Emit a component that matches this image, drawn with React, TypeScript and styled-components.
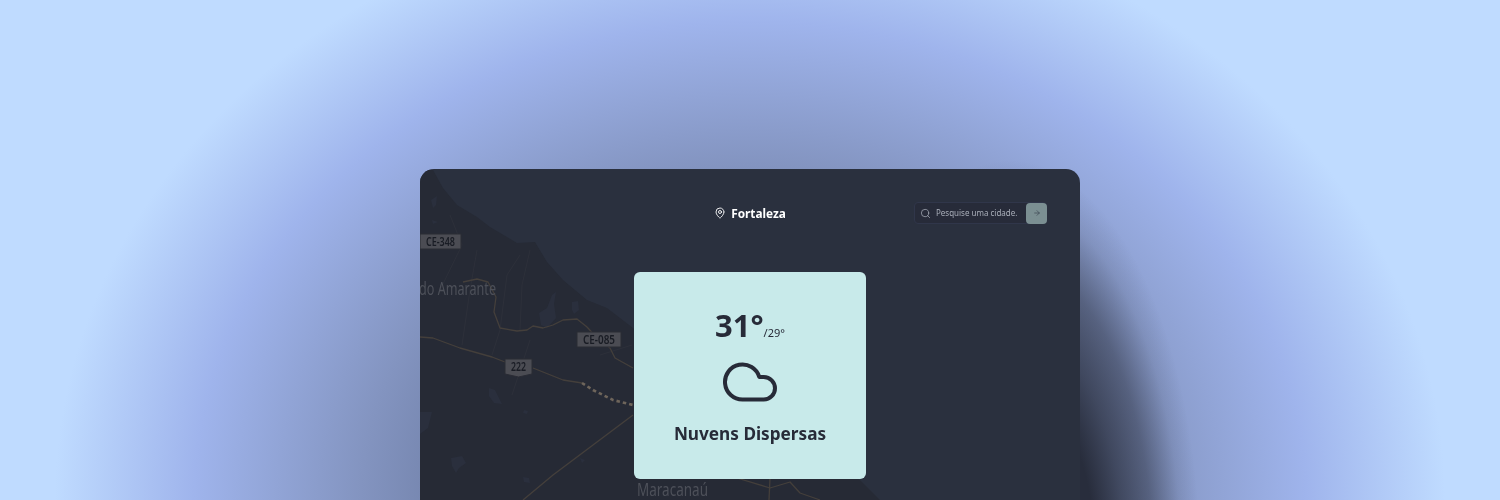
import React from "react";
import styled, { createGlobalStyle } from "styled-components";
import { MapPin, Search, ArrowRight, Cloud } from "lucide-react";

const Global = createGlobalStyle`
  html, body { margin: 0; padding: 0; background: #bfdbff; }
  body { font-family: "Noto Sans", "Open Sans", sans-serif; }
`;

const Stage = styled.main`
  height: 500px;
  overflow: hidden;
  box-sizing: border-box;
  padding-top: 169px;
  display: flex;
  justify-content: center;
  background:
    radial-gradient(ellipse 190px 400px at 1010px 560px,
      rgba(40, 45, 60, 1) 45%,
      rgba(40, 45, 60, 0.72) 60%,
      rgba(40, 45, 60, 0.5) 75%,
      rgba(40, 45, 60, 0.12) 90%,
      rgba(40, 45, 60, 0) 100%),
    radial-gradient(ellipse 695px 598px at 750px 500px,
      #7585ae 45%,
      #8394c0 56%,
      #9fb4ec 80%,
      #bfdbff 100%);
`;

const Frame = styled.section`
  position: relative;
  width: 660px;
  height: 400px;
  flex: none;
  border-radius: 14px;
  overflow: hidden;
  background: #2a303e;
`;

const MapLayer = styled.svg`
  position: absolute;
  inset: 0;
  width: 660px;
  height: 400px;
  filter: blur(0.6px);
`;

const Header = styled.header`
  position: relative;
  display: grid;
  grid-template-columns: 1fr auto 1fr;
  align-items: center;
  padding: 33px 33px 0;
  filter: blur(0.25px);
`;

const City = styled.div`
  grid-column: 2;
  display: flex;
  align-items: center;
  gap: 5px;
  color: #fff;
  font-size: 11.8px;
  font-weight: 700;
  line-height: 20px;
`;

const SearchForm = styled.form`
  grid-column: 3;
  justify-self: end;
  width: 133px;
  height: 22px;
  box-sizing: border-box;
  display: flex;
  align-items: center;
  background: #272b39;
  border: 1px solid #30364a;
  border-radius: 4px;
  padding-left: 5px;
  gap: 5px;
  color: #a9aeb9;
`;

const SearchText = styled.span`
  flex: 1;
  font-size: 8px;
  line-height: 12px;
  white-space: nowrap;
  color: #a9aeb9;
`;

const GoButton = styled.span`
  width: 21px;
  height: 21px;
  margin-right: -1px;
  flex: none;
  display: flex;
  align-items: center;
  justify-content: center;
  background: #7b8f92;
  border-radius: 4px;
  color: #3a4450;
`;

const Card = styled.article`
  position: relative;
  margin: 48px auto 0;
  width: 232px;
  height: 207px;
  box-sizing: border-box;
  padding-top: 32px;
  border-radius: 6px;
  background: #c8eaea;
  color: #272b38;
  display: flex;
  flex-direction: column;
  align-items: center;
  filter: blur(0.25px);
`;

const Temps = styled.div`
  display: flex;
  align-items: baseline;
  line-height: 42px;
  height: 42px;
`;

const Current = styled.span`
  font-size: 31px;
  font-weight: 700;
`;

const Low = styled.span`
  font-size: 11px;
  font-weight: 400;
`;

const IconSlot = styled.div`
  margin-top: 6px;
  height: 60px;
  display: flex;
  align-items: center;
  justify-content: center;
`;

const Condition = styled.h2`
  margin: 8px 0 0;
  font-size: 17.2px;
  font-weight: 700;
  line-height: 28px;
`;

const road = "#443f3b";

function Shield({ x, y, w, h, label }: { x: number; y: number; w: number; h: number; label: string }) {
  return (
    <g>
      <rect x={x} y={y} width={w} height={h} fill="#4b4c53" stroke="#2a2c35" strokeWidth="1" />
      <text
        x={x + w / 2}
        y={y + h / 2 + 4.5}
        textAnchor="middle"
        fontFamily="'Noto Sans', sans-serif"
        fontSize="12.5"
        fontWeight="600"
        fill="#191c24"
        textLength={w - 12}
        lengthAdjust="spacingAndGlyphs"
      >
        {label}
      </text>
    </g>
  );
}

function MapArt() {
  return (
    <MapLayer viewBox="420 169 660 400" aria-hidden="true">
      <path
        d="M420 169L433 170L443 188L457 205L477 217L490 227L517 243L535 242L547 262L563 280L587 300L607 308L633 328L700 400L860 480L880 500L890 570L420 570Z"
        fill="#262a35"
      />
      <g fill="#2a2f3d">
        <path d="M552 295L556 292L554 304L556 318L547 328L541 325L539 313L547 308Z" />
        <path d="M572 302L578 301L579 310L574 314L572 310Z" />
        <path d="M489 388L495 390L500 400L502 404L494 403L489 396Z" />
        <path d="M420 412L432 412L428 428L420 434Z" />
        <path d="M451 458L462 456L466 463L459 468L456 473L452 466Z" />
        <path d="M524 410L528 411L527 414L523 413Z" />
        <path d="M523 477L529 478L530 483L524 482Z" />
        <path d="M580 458L585 460L582 463Z" />
        <path d="M431 200L437 196L436 205L433 208Z" />
        <path d="M432 220L438 222L433 224Z" />
      </g>
      <g fill="none" stroke="#2d303a" strokeWidth="1">
        <path d="M477 250L470 290L462 345" />
        <path d="M520 255L507 275L500 330L492 355" />
        <path d="M530 250L522 285L520 330" />
        <path d="M450 215L462 245L440 290" />
        <path d="M530 340L512 395" />
        <path d="M600 355L632 345" />
      </g>
      <g fill="none" stroke={road} strokeWidth="1.3" strokeLinejoin="round">
        <path d="M463 282L477 279L488 282L496 297L494 312L500 328L517 331L527 330L533 326L543 328L553 325L563 320L577 319L587 327L597 338L610 348L615 358L633 368" />
        <path d="M420 337L433 338L460 348L492 357L505 362" />
        <path d="M533 368L563 380L582 383" />
        <path d="M633 415L593 445L553 475L523 500" />
        <path d="M737 478L770 488L790 482L800 493L820 500" />
        <path d="M770 478L769 500" />
      </g>
      <path d="M582 383L593 390L613 400L633 405" fill="none" stroke="#6e655b" strokeWidth="2.6" strokeDasharray="3.5 3" />
      <Shield x={420} y={234} w={41} h={15} label="CE-348" />
      <Shield x={577} y={332} w={44} h={15} label="CE-085" />
      <path d="M505 359H532V374L518.5 377L505 374Z" fill="#4b4c53" stroke="#2a2c35" />
      <text
        x={518.5}
        y={371}
        textAnchor="middle"
        fontFamily="'Noto Sans', sans-serif"
        fontSize="12.5"
        fontWeight="600"
        fill="#191c24"
        textLength={15}
        lengthAdjust="spacingAndGlyphs"
      >
        222
      </text>
      <text x={419} y={295} fontFamily="'Noto Sans', sans-serif" fontSize="18" fill="#4d5059" textLength={77} lengthAdjust="spacingAndGlyphs">
        do Amarante
      </text>
      <text x={637} y={496} fontFamily="'Noto Sans', sans-serif" fontSize="18" fill="#4d5059" textLength={71} lengthAdjust="spacingAndGlyphs">
        Maracanaú
      </text>
    </MapLayer>
  );
}

export default function App() {
  return (
    <Stage>
      <Global />
      <Frame>
        <MapArt />
        <Header>
          <City>
            <MapPin size={12} strokeWidth={1.8} />
            Fortaleza
          </City>
          <SearchForm>
            <Search size={11} strokeWidth={1.6} />
            <SearchText>Pesquise uma cidade.</SearchText>
            <GoButton>
              <ArrowRight size={8} strokeWidth={2} />
            </GoButton>
          </SearchForm>
        </Header>
        <Card>
          <Temps>
            <Current>31°</Current>
            <Low>/29°</Low>
          </Temps>
          <IconSlot>
            <Cloud size={60} strokeWidth={1.6} />
          </IconSlot>
          <Condition>Nuvens Dispersas</Condition>
        </Card>
      </Frame>
    </Stage>
  );
}
